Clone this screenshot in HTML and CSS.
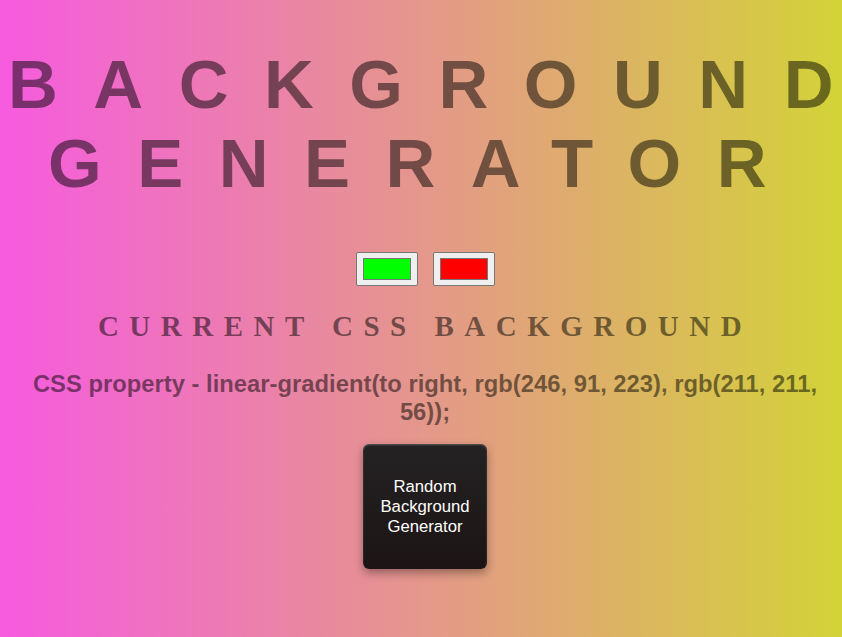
FILE: index.html
```html
<!DOCTYPE html>
<html>
<head>
<meta charset="utf-8">
<title>Background Generator</title>
<link rel="stylesheet" href="styles.css">
</head>
<body>
<main class="page">
  <h1 class="title">Background Generator</h1>
  <div class="pickers">
    <span class="picker"><span class="swatch swatch-green"></span></span>
    <span class="picker"><span class="swatch swatch-red"></span></span>
  </div>
  <h3 class="subtitle">Current CSS Background</h3>
  <p class="css-text">CSS property - linear-gradient(to right, rgb(246, 91, 223), rgb(211, 211, 56));</p>
  <button class="random-btn">Random Background Generator</button>
</main>
</body>
</html>
```
FILE: styles.css
```css
html, body {
  margin: 0;
  height: 100%;
}
body {
  background: linear-gradient(to right, rgb(246, 91, 223), rgb(211, 211, 56));
  font-family: "Liberation Sans", Arial, sans-serif;
  overflow: hidden;
}
.page {
  display: flex;
  flex-direction: column;
  align-items: center;
  padding: 0 0 0 8px;
}
.title {
  margin: 45px 0 0;
  width: 100%;
  font-size: 69px;
  font-weight: bold;
  line-height: 79px;
  letter-spacing: 35.5px;
  text-transform: uppercase;
  text-align: center;
  color: rgba(0, 0, 0, 0.5);
}
.pickers {
  display: flex;
  gap: 15px;
  margin-top: 49px;
}
.picker {
  display: flex;
  width: 62px;
  height: 34px;
  box-sizing: border-box;
  padding: 5px 6px;
  background: #efefef;
  border: 1px solid #767676;
  border-radius: 2px;
}
.swatch {
  flex: 1;
  border: 1px solid #777;
}
.swatch-green { background: #00ff00; }
.swatch-red { background: #ff0000; }
.subtitle {
  margin: 24px 0 0;
  font-family: "Liberation Serif", "Times New Roman", serif;
  font-size: 29px;
  font-weight: bold;
  letter-spacing: 10.5px;
  text-transform: uppercase;
  color: rgba(0, 0, 0, 0.5);
  text-align: center;
}
.css-text {
  margin: 27px 0 0;
  font-size: 23.8px;
  font-weight: bold;
  line-height: 28px;
  text-align: center;
  color: rgba(0, 0, 0, 0.5);
}
.random-btn {
  margin-top: 18px;
  width: 124px;
  height: 125px;
  padding: 0 12px;
  border: none;
  border-radius: 6px;
  background: linear-gradient(to bottom, #242223, #1c1414);
  color: #fff;
  font-family: "Liberation Sans", Arial, sans-serif;
  font-size: 16.7px;
  line-height: 20px;
  box-shadow: 0 4px 10px rgba(0, 0, 0, 0.35), inset 0 1px 2px rgba(255, 255, 255, 0.25);
}
```
